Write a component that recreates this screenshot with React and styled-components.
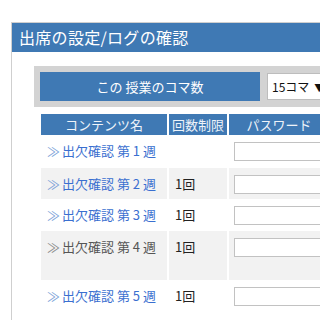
import styled, { createGlobalStyle } from "styled-components";

const Global = createGlobalStyle`
  html, body {
    margin: 0;
    background: #fff;
    overflow: hidden;
  }
  body {
    font-family: "Noto Sans CJK JP", "Noto Sans", sans-serif;
  }
`;

const Page = styled.div`
  padding: 22px 0 0 11px;
`;

const Panel = styled.div`
  width: 440px;
  border: 1px solid #cfcfcf;
  border-bottom: none;
  min-height: 320px;
`;

const PanelHead = styled.div`
  height: 29px;
  background: #3f79b4;
  color: #fff;
  font-size: 16px;
  line-height: 29px;
  padding-left: 7px;
  letter-spacing: 0.3px;
`;

const PanelBody = styled.div`
  padding: 14px 0 0 22px;
`;

const CountBox = styled.div`
  display: flex;
  align-items: center;
  gap: 7px;
  background: #d3d3d3;
  padding: 6px;
`;

const CountLabel = styled.div`
  width: 220px;
  height: 29px;
  background: #3f79b4;
  color: #fff;
  font-size: 13px;
  line-height: 29px;
  text-align: center;
`;

const Select = styled.div`
  width: 120px;
  height: 25px;
  background: #fff;
  border: 1px solid #bdbdbd;
  font-size: 12px;
  line-height: 25px;
  padding-left: 4px;
  color: #111;
  white-space: nowrap;
`;

const Arrow = styled.span`
  font-size: 10px;
  margin-left: 5px;
`;

const Grid = styled.div`
  display: grid;
  grid-template-columns: 126px 58px 100px;
  column-gap: 2px;
  margin: 7px 0 0 7px;
`;

const Th = styled.div`
  height: 21px;
  background: #3f79b4;
  color: #eef3f9;
  font-size: 13px;
  line-height: 21px;
  text-align: center;
  white-space: nowrap;
`;

const Td = styled.div`
  background: ${(p) => (p.$alt ? "#f2f2f2" : "#fff")};
  height: ${(p) => p.$h}px;
  padding-top: 7px;
  box-sizing: border-box;
  font-size: 13px;
  line-height: 18px;
  white-space: nowrap;
`;

const Name = styled(Td)`
  padding-left: 6px;
  color: ${(p) => (p.$link ? "#3a6fd0" : "#555")};
`;

const Mark = styled.span`
  color: ${(p) => (p.$link ? "#7b9fd8" : "#888")};
  margin-right: 2px;
`;

const Limit = styled(Td)`
  padding-left: 6px;
  color: #222;
`;

const PassCell = styled(Td)`
  padding: 7px 0 0 5px;
`;

const Input = styled.div`
  width: 170px;
  height: 17px;
  border: 1px solid #c2c2c2;
  background: #fff;
`;

const rows = [
  { n: 1, limit: "", link: true, h: 33 },
  { n: 2, limit: "1回", link: true, h: 31 },
  { n: 3, limit: "1回", link: true, h: 32 },
  { n: 4, limit: "1回", link: false, h: 49 },
  { n: 5, limit: "1回", link: true, h: 31 },
];

export default function App() {
  return (
    <Page>
      <Global />
      <Panel>
        <PanelHead>出席の設定/ログの確認</PanelHead>
        <PanelBody>
          <CountBox>
            <CountLabel>この 授業のコマ数</CountLabel>
            <Select>
              15コマ<Arrow>▼</Arrow>
            </Select>
          </CountBox>
          <Grid>
            <Th>コンテンツ名</Th>
            <Th>回数制限</Th>
            <Th>パスワード</Th>
            {rows.map((r, i) => {
              const alt = i % 2 === 1;
              return [
                <Name key={"a" + i} $alt={alt} $h={r.h} $link={r.link}>
                  <Mark $link={r.link}>≫</Mark>出欠確認 第 {r.n} 週
                </Name>,
                <Limit key={"b" + i} $alt={alt} $h={r.h}>{r.limit}</Limit>,
                <PassCell key={"c" + i} $alt={alt} $h={r.h}>
                  <Input />
                </PassCell>,
              ];
            })}
          </Grid>
        </PanelBody>
      </Panel>
    </Page>
  );
}
